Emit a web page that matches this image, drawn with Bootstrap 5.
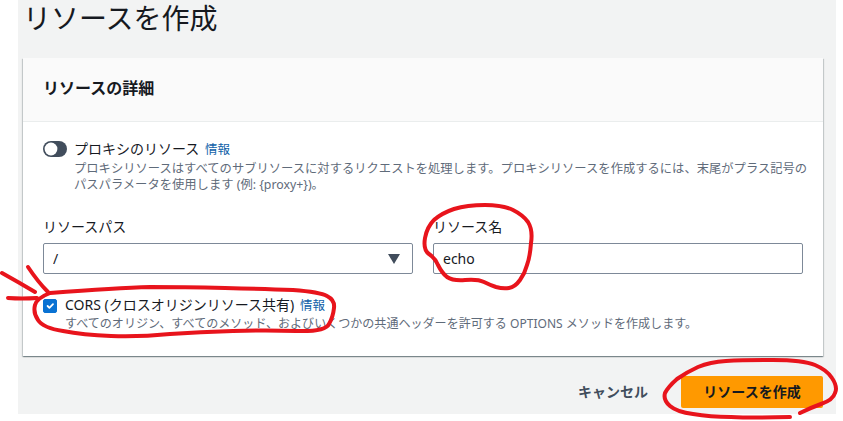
<!DOCTYPE html>
<html lang="ja">
<head>
<meta charset="utf-8">
<title>リソースを作成</title>
<link rel="stylesheet" href="https://cdn.jsdelivr.net/npm/bootstrap@5.3.0/dist/css/bootstrap.min.css">
<style>
html,body{height:421px;overflow:hidden;background:#fff;}
body{font-family:"Noto Sans","Noto Sans CJK JP",sans-serif;color:#16191f;font-size:14px;}
.shell{position:relative;width:843px;height:421px;}
.panel{margin-left:18px;width:818px;height:414px;background:#f2f3f3;padding:0 13px 0 5px;}
.pagetitle{font-size:28px;font-weight:400;line-height:36px;margin:0;height:58px;padding-left:0;color:#16191f;}
.detail-card{height:298px;border:0;border-radius:0;background:#fff;box-shadow:0 1px 1px rgba(0,28,36,.3),1px 1px 1px rgba(0,28,36,.15),-1px 1px 1px rgba(0,28,36,.15);}
.detail-head{height:64px;background:#fafafa;border-bottom:1px solid #eaeded;border-radius:0!important;padding:0 20px 3px;display:flex;align-items:center;font-size:16px;font-weight:700;}
.detail-body{padding:0 20px;}
.form-switch.tog-row{padding:19px 0 0;height:96px;}
.form-switch.tog-row .form-check-input{width:24px;height:16px;margin:0 7px 0 0;flex:none;background-color:#414d5c;border:0;background-image:url("data:image/svg+xml,%3csvg xmlns='http://www.w3.org/2000/svg' viewBox='-4 -4 8 8'%3e%3ccircle r='3.2' fill='%23fff'/%3e%3c/svg%3e");background-position:left center;}
.tog-label{line-height:16px;font-size:14px;}
.tip{font-size:12.3px;line-height:16px;color:#5f6b7a;white-space:nowrap;margin-top:3px;}
.tip-narrow{font-size:12.05px;margin-top:2px;}
.infolink{color:#0f5fa8;font-size:12.5px;text-decoration:none;margin-left:2px;}
.field-label{font-size:14px;line-height:18px;margin-bottom:7px;}
.path-row{--bs-gutter-x:20px;width:780px;}
.path-row .form-control,.path-row .form-select{height:31px;border:1px solid #7d8998;border-radius:2px;font-size:14px;color:#16191f;padding:0 9px;min-height:0;}
.path-row .form-select{background-image:url("data:image/svg+xml,%3csvg xmlns='http://www.w3.org/2000/svg' viewBox='0 0 12 10'%3e%3cpath d='M0 0h12L6 10z' fill='%23414d5c'/%3e%3c/svg%3e");background-size:12px 10px;background-position:right 12px center;}
.cors-row{margin-top:23px;}
.cors-row .form-check-input{width:14px;height:14px;margin:2px 8px 0 0;flex:none;background-color:#0972d3;border-color:#0972d3;border-radius:2px;}
.cors-label{line-height:16px;font-size:14px;}
.cta-row{height:32px;margin-top:20px;}
.cancel-link{font-size:14px;font-weight:600;color:#414d5c;text-decoration:none;margin-right:33px;padding-bottom:2px;}
.cta-btn{width:142px;height:32px;background:#ff9900;border:0;border-radius:2px;font-size:14px;font-weight:600;color:#16191f;padding:0 0 2px;}
.scribble{position:absolute;left:0;top:0;pointer-events:none;}
</style>
</head>
<body>
<div class="shell">
  <main class="panel">
    <h1 class="pagetitle">リソースを作成</h1>
    <section class="card detail-card">
      <div class="card-header detail-head">リソースの詳細</div>
      <div class="card-body detail-body">
        <div class="tog-row form-switch d-flex">
          <input class="form-check-input" type="checkbox" role="switch" aria-label="プロキシのリソース">
          <div>
            <div class="tog-label">プロキシのリソース <a href="#" class="infolink">情報</a></div>
            <div class="tip">プロキシリソースはすべてのサブリソースに対するリクエストを処理します。プロキシリソースを作成するには、末尾がプラス記号の<br>パスパラメータを使用します (例: {proxy+})。</div>
          </div>
        </div>
        <div class="row path-row">
          <div class="col-6">
            <div class="field-label">リソースパス</div>
            <select class="form-select" aria-label="リソースパス"><option>/</option></select>
          </div>
          <div class="col-6">
            <div class="field-label">リソース名</div>
            <input class="form-control" type="text" value="echo" aria-label="リソース名">
          </div>
        </div>
        <div class="cors-row d-flex">
          <input class="form-check-input" type="checkbox" checked aria-label="CORS">
          <div>
            <div class="cors-label">CORS (クロスオリジンリソース共有) <a href="#" class="infolink">情報</a></div>
            <div class="tip tip-narrow">すべてのオリジン、すべてのメソッド、およびいくつかの共通ヘッダーを許可する OPTIONS メソッドを作成します。</div>
          </div>
        </div>
      </div>
    </section>
    <div class="cta-row d-flex justify-content-end align-items-center">
      <a href="#" class="cancel-link">キャンセル</a>
      <button type="button" class="btn cta-btn">リソースを作成</button>
    </div>
  </main>
  <svg class="scribble" width="843" height="421" viewBox="0 0 843 421" fill="none" stroke="#e8141c" stroke-width="4" stroke-linecap="round" stroke-linejoin="round" aria-hidden="true">
    <path d="M454 209Q467 205 485 205Q503 205 513 210Q523 215 528 222Q533 230 531 243Q530 257 527 265Q525 273 520 280Q515 287 509 288Q503 289 496 287Q490 285 484 282Q478 279 465 280Q453 281 447 277Q442 273 438 265Q435 258 429 254Q423 250 425 238Q427 227 434 220Q442 213 454 209Z"/>
    <path d="M790 417Q753 418 731 417Q710 417 693 414Q677 412 670 406Q663 400 665 393Q668 387 677 379Q687 372 698 367Q710 362 726 361Q743 360 773 360Q803 360 815 365Q827 370 832 378Q838 387 835 393Q833 400 821 404Q810 408 800 413"/>
    <path d="M50 293Q117 288 150 287Q183 287 225 288Q267 289 293 290Q320 292 327 296Q335 300 334 308Q333 317 329 324Q325 332 296 331Q267 330 233 331Q200 332 170 334Q140 337 111 336Q83 335 63 331Q43 328 38 320Q33 313 35 305Q37 298 50 293Z"/>
    <path d="M2 273Q20 283 35 292"/>
    <path d="M28 267Q38 282 48 292"/>
    <path d="M8 298Q22 299 37 298"/>
  </svg>
</div>
<script src="https://cdn.jsdelivr.net/npm/bootstrap@5.3.0/dist/js/bootstrap.bundle.min.js"></script>
</body>
</html>
